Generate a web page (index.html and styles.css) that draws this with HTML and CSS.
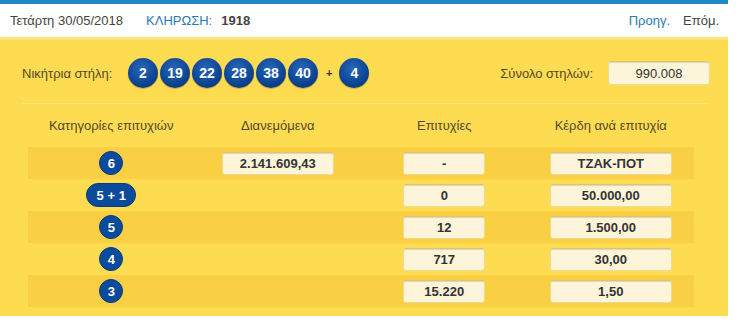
FILE: index.html
```html
<!DOCTYPE html>
<html lang="el">
<head>
<meta charset="utf-8">
<title>Τζόκερ</title>
<link rel="stylesheet" href="styles.css">
</head>
<body>
<div class="wrap">
  <div class="topbar">
    <div class="left">
      <span class="date">Τετάρτη 30/05/2018</span>
      <span class="draw-label">ΚΛΗΡΩΣΗ:</span>
      <span class="draw-no">1918</span>
    </div>
    <div class="nav">
      <a class="prev">Προηγ.</a>
      <a class="next">Επόμ.</a>
    </div>
  </div>
  <div class="panel">
    <div class="winrow">
      <span class="label">Νικήτρια στήλη:</span>
      <div class="balls">
        <span class="ball">2</span>
        <span class="ball">19</span>
        <span class="ball">22</span>
        <span class="ball">28</span>
        <span class="ball">38</span>
        <span class="ball">40</span>
        <span class="plus">+</span>
        <span class="ball">4</span>
      </div>
      <span class="total-label">Σύνολο στηλών:</span>
      <span class="box total">990.008</span>
    </div>
    <div class="sep"></div>
    <div class="grid head">
      <div>Κατηγορίες επιτυχιών</div>
      <div>Διανεμόμενα</div>
      <div>Επιτυχίες</div>
      <div>Κέρδη ανά επιτυχία</div>
    </div>
    <div class="grid row dark">
      <div><span class="cat">6</span></div>
      <div><span class="box b-dist">2.141.609,43</span></div>
      <div><span class="box b-win">-</span></div>
      <div><span class="box b-prize">ΤΖΑΚ-ΠΟΤ</span></div>
    </div>
    <div class="grid row">
      <div><span class="cat pill">5 + 1</span></div>
      <div></div>
      <div><span class="box b-win">0</span></div>
      <div><span class="box b-prize">50.000,00</span></div>
    </div>
    <div class="grid row dark">
      <div><span class="cat">5</span></div>
      <div></div>
      <div><span class="box b-win">12</span></div>
      <div><span class="box b-prize">1.500,00</span></div>
    </div>
    <div class="grid row">
      <div><span class="cat">4</span></div>
      <div></div>
      <div><span class="box b-win">717</span></div>
      <div><span class="box b-prize">30,00</span></div>
    </div>
    <div class="grid row dark">
      <div><span class="cat">3</span></div>
      <div></div>
      <div><span class="box b-win">15.220</span></div>
      <div><span class="box b-prize">1,50</span></div>
    </div>
  </div>
</div>
</body>
</html>
```

FILE: styles.css
```css
* { box-sizing: border-box; }
body {
  margin: 0;
  font-family: "Liberation Sans", Arial, sans-serif;
  font-size: 13px;
  color: #333;
  background: #fff;
}
.wrap { width: 728px; }
.topbar {
  border-top: 4px solid #2289c8;
  height: 37px;
  display: flex;
  align-items: center;
  justify-content: space-between;
  padding: 0 9px 0 10px;
}
.left { display: flex; align-items: center; }
.date { color: #444; }
.draw-label { color: #2a78b4; margin-left: 23px; }
.draw-no { color: #444; font-weight: bold; margin-left: 9px; }
.nav { display: flex; gap: 13px; }
.prev { color: #2a78b4; }
.next { color: #444; }

.panel {
  background: #fddc52;
  border-top: 3px solid #f8e375;
  padding: 18px 0 9px 1px;
}
.winrow {
  display: flex;
  align-items: center;
  height: 30px;
  padding-left: 21px;
}
.label { color: #54492a; width: 106px; }
.balls { display: flex; align-items: center; gap: 2px; }
.ball {
  width: 30px;
  height: 30px;
  border-radius: 50%;
  display: flex;
  align-items: center;
  justify-content: center;
  color: #fff;
  font-weight: bold;
  font-size: 14px;
  background: radial-gradient(circle at 45% 35%, #2b67b6 0%, #0f4a9c 50%, #062c66 100%);
  box-shadow: 0 1px 1px rgba(120, 90, 0, 0.35);
}
.plus { font-weight: bold; font-size: 11px; color: #333; margin: 0 5px 0 6px; }
.total-label { color: #54492a; margin-left: auto; margin-right: 15px; }
.box {
  display: flex;
  align-items: center;
  justify-content: center;
  height: 24px;
  background: #fdf5d9;
  border: 1px solid #eedb96;
  border-top-color: #d9c47a;
  border-radius: 3px;
  box-shadow: inset 0 1px 1px rgba(150, 120, 40, 0.25);
  color: #333;
}
.total { width: 102px; margin-right: 18px; }
.sep {
  height: 1px;
  background: #fbe57f;
  margin: 15px 19px 0 21px;
}
.grid {
  display: grid;
  grid-template-columns: repeat(4, 1fr);
  margin: 0 34px 0 27px;
}
.grid > div {
  display: flex;
  align-items: center;
  justify-content: center;
}
.head { height: 43px; color: #54492a; }
.row { height: 32px; }
.row.dark { background: #f9cf44; }
.cat {
  min-width: 24px;
  height: 24px;
  border-radius: 12px;
  background: #0b4b9c;
  border: 1px solid #083a7c;
  color: #fff;
  font-weight: bold;
  font-size: 13px;
  display: flex;
  align-items: center;
  justify-content: center;
}
.pill { width: 50px; }
.row .box { font-weight: bold; height: 23px; }
.b-dist { width: 112px; }
.b-win { width: 82px; }
.b-prize { width: 122px; }
```
